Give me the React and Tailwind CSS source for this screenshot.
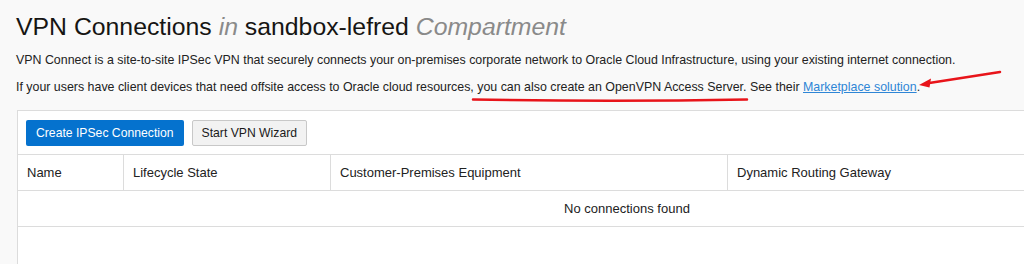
import React from 'react'

const COLUMNS = [
    { label: 'Name', width: 'w-[105px]' },
    { label: 'Lifecycle State', width: 'w-[207px]' },
    { label: 'Customer-Premises Equipment', width: 'w-[397px]' },
    { label: 'Dynamic Routing Gateway', width: 'flex-1' },
];

const App = () => {
    return (
        <div className="relative w-[1024px] h-[264px] overflow-hidden bg-[#f9f9f9] text-[#222] font-['Liberation_Sans',Arial,sans-serif]">
            <div className="pl-4 pt-[12px]">
                <h1 className="text-[24.8px] leading-[30px] text-[#161513]">
                    VPN Connections <em className="text-[#8a8a8a]">in</em> sandbox-lefred <em className="text-[#8a8a8a]">Compartment</em>
                </h1>
                <p className="mt-[10px] text-[12.4px] leading-[16px]">
                    VPN Connect is a site-to-site IPSec VPN that securely connects your on-premises corporate network to Oracle Cloud Infrastructure, using your existing internet connection.
                </p>
                <p className="mt-[11px] text-[12.4px] leading-[16px]">
                    If your users have client devices that need offsite access to Oracle cloud resources, you can also create an OpenVPN Access Server. See their{' '}
                    <a href="#" className="text-[#2f86d6] underline">Marketplace solution</a>.
                </p>
            </div>

            {/* panel */}
            <div className="ml-[17px] mt-[15px] w-[1220px] h-[200px] bg-white border border-[#dcdcdc]">
                <div className="flex gap-[8px] pl-[8px] pt-[9px] pb-[8px]">
                    <button className="h-[26px] px-[10px] rounded-[2px] bg-[#0572ce] text-white text-[12.2px]">
                        Create IPSec Connection
                    </button>
                    <button className="h-[26px] px-[9px] rounded-[2px] bg-[#f2f2f2] border border-[#c8c8c8] text-[#1a1a1a] text-[12.2px]">
                        Start VPN Wizard
                    </button>
                </div>
                <div className="flex h-[37px] border-y border-[#dcdcdc]">
                    {COLUMNS.map((c, i) => (
                        <div key={c.label} className={`${c.width} flex items-center pl-[9px] text-[13px] ${i > 0 ? 'border-l border-[#dcdcdc]' : ''}`}>
                            {c.label}
                        </div>
                    ))}
                </div>
                <div className="flex h-[36px] items-center justify-center border-b border-[#dcdcdc] text-[13px]">
                    No connections found
                </div>
            </div>

            {/* annotations */}
            <svg className="absolute inset-0 pointer-events-none" width="1024" height="264">
                <path d="M473 99.5 Q610 102 747 99.5" stroke="#e8141a" strokeWidth="2.5" fill="none" strokeLinecap="round" />
                <line x1="1000" y1="72" x2="926" y2="83.5" stroke="#e8141a" strokeWidth="2.5" strokeLinecap="round" />
                <path d="M919 85 L931 78.5 L929.5 87.5 Z" fill="#e8141a" />
            </svg>
        </div>
    )
}

export default App
